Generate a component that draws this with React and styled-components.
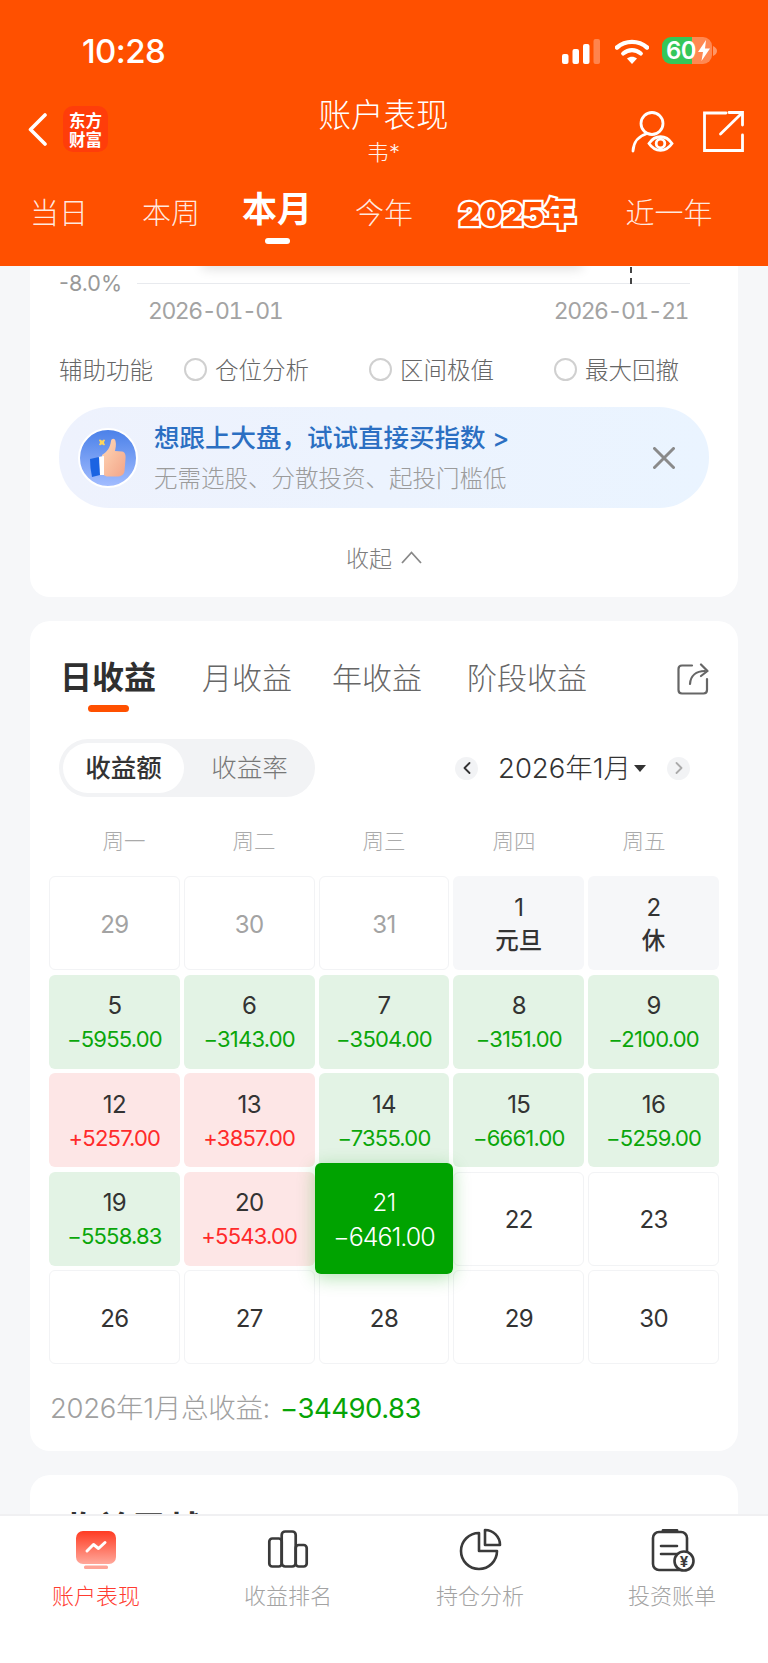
import React from "react";
import styled, { createGlobalStyle } from "styled-components";

const GlobalStyle = createGlobalStyle`
  html, body { margin: 0; padding: 0; background: #f6f7f9; }
  * { box-sizing: border-box; }
  body { font-family: Inter, "Noto Sans CJK SC", sans-serif; }
`;

const Page = styled.div`
  width: 768px;
  height: 1663px;
  display: flex;
  flex-direction: column;
  overflow: hidden;
  background: #f6f7f9;
`;

/* header */
const Header = styled.header`
  height: 266px;
  flex: none;
  background: #ff5000;
  color: #fff;
  position: relative;
  z-index: 2;
`;

const StatusBar = styled.div`
  height: 94px;
  padding: 34px 51px 0 82px;
  display: flex;
  justify-content: space-between;
  align-items: flex-start;
`;

const Clock = styled.span`
  font-size: 33px;
  font-weight: 500;
  line-height: 34px;
  letter-spacing: -0.6px;
`;

const StatusIcons = styled.div`
  display: flex;
  align-items: flex-start;
  margin-top: 5px;
`;

const Battery = styled.div`
  width: 50px;
  height: 27px;
  margin: -2px 0 0 13px;
  border-radius: 9px;
  overflow: hidden;
  position: relative;
  display: flex;
  align-items: center;
  padding-left: 4px;
  background: linear-gradient(90deg, #34c759 0 60%, rgba(255, 255, 255, 0.32) 60%);
  font-size: 24px;
  font-weight: 600;
  letter-spacing: -0.5px;
  line-height: 27px;
`;

const NavRow = styled.div`
  height: 70px;
  padding: 0 24px 0 28px;
  display: flex;
  align-items: center;
`;

const Back = styled.svg`
  width: 19px;
  height: 33px;
`;

const Logo = styled.div`
  width: 45px;
  height: 46px;
  margin-left: 16px;
  border-radius: 10px;
  background: #ff3d0a;
  font-size: 16.5px;
  font-weight: 700;
  line-height: 18.5px;
  text-align: center;
  padding-top: 5px;
  font-family: "Noto Sans CJK SC", sans-serif;
`;

const TitleBlock = styled.div`
  flex: 1;
  text-align: center;
  padding-left: 28px;
  margin-top: 2px;
`;

const Title = styled.div`
  font-size: 32.5px;
  line-height: 44px;
  font-weight: 300;
`;

const SubTitle = styled.div`
  font-size: 22px;
  line-height: 29px;
  font-weight: 300;
  opacity: 0.92;
`;

const NavIcons = styled.div`
  display: flex;
  gap: 29px;
  margin-top: 6px;
`;

const PeriodTabs = styled.div`
  margin-top: 23px;
  display: grid;
  grid-template-columns: 118px 106px 106px 108px 158px 146px;
`;

const PeriodTab = styled.div`
  position: relative;
  height: 56px;
  text-align: center;
  font-size: ${(p) => (p.$active ? 35 : 29)}px;
  font-weight: ${(p) => (p.$active ? 700 : 300)};
  line-height: ${(p) => (p.$active ? 44 : 54)}px;
  color: ${(p) => (p.$active ? "#fff" : "rgba(255,255,255,0.88)")};
`;

const PeriodMark = styled.i`
  display: block;
  width: 25px;
  height: 6px;
  margin: 7px auto 0;
  border-radius: 3px;
  background: #fff;
`;

const OutlinedTab = styled.span`
  font-size: 33px;
  font-weight: 900;
  letter-spacing: -1px;
  color: #ff5000;
  -webkit-text-stroke: 4.5px #fff;
  paint-order: stroke fill;
`;

/* content */
const Content = styled.main`
  flex: 1;
  min-height: 0;
  overflow: hidden;
  padding: 0 30px;
  display: flex;
  flex-direction: column;
  gap: 24px;
`;

const Card = styled.section`
  flex: none;
  position: relative;
  background: #fff;
  border-radius: 20px;
`;

const ChartCard = styled(Card)`
  height: 331px;
  border-radius: 0 0 20px 20px;
`;

const TooltipShadow = styled.div`
  position: absolute;
  top: -12px;
  left: 172px;
  width: 380px;
  height: 12px;
  box-shadow: 0 3px 12px rgba(0, 0, 0, 0.13);
`;

const AxisRow = styled.div`
  height: 34px;
  padding: 0 48px 0 29px;
  display: flex;
  align-items: center;
  font-size: 21.5px;
  line-height: 34px;
  color: #999;
`;

const AxisLine = styled.div`
  flex: 1;
  height: 1px;
  margin-left: 15px;
  background: #e8eaee;
  position: relative;
`;

const Crosshair = styled.div`
  position: absolute;
  left: 493px;
  bottom: 0;
  height: 17px;
  border-left: 2px dashed #444;
`;

const AxisDates = styled.div`
  display: flex;
  justify-content: space-between;
  padding: 0 50px 0 118px;
  font-size: 23px;
  line-height: 22px;
  letter-spacing: -1.5px;
  font-variant-numeric: tabular-nums;
  color: #a3a3a3;
`;

const AssistRow = styled.div`
  margin-top: 30px;
  padding-left: 29px;
  display: grid;
  grid-template-columns: 125px 185px 185px 185px;
  align-items: center;
  height: 30px;
  font-size: 23.5px;
  font-weight: 300;
  color: #666;
`;

const AssistOption = styled.label`
  display: flex;
  align-items: center;
  gap: 8px;
`;

const Radio = styled.span`
  width: 23px;
  height: 23px;
  border-radius: 50%;
  border: 2px solid #d0d0d0;
`;

const Banner = styled.div`
  margin: 25px 29px 0;
  height: 101px;
  border-radius: 50px;
  padding: 0 34px 0 19px;
  display: flex;
  align-items: center;
  background: linear-gradient(90deg, #eef2fd, #eaf4ff);
`;

const BannerText = styled.div`
  margin-left: 16px;
  flex: 1;
  margin-top: 2px;
`;

const BannerTitle = styled.div`
  font-size: 25.5px;
  line-height: 36px;
  font-weight: 500;
  color: #2b6fc2;
`;

const BannerSub = styled.div`
  margin-top: 5px;
  font-size: 23.5px;
  line-height: 36px;
  font-weight: 300;
  color: #9b9b9b;
`;

const Collapse = styled.div`
  margin-top: 30px;
  height: 38px;
  display: flex;
  justify-content: center;
  align-items: center;
  gap: 9px;
  font-size: 23px;
  font-weight: 300;
  color: #7d7d7d;
`;

const CalendarCard = styled(Card)`
  height: 830px;
  padding: 0 19px;
`;

const CalendarTabs = styled.div`
  height: 84px;
  padding: 37px 10px 0 11px;
  display: flex;
  align-items: flex-start;
  position: relative;
`;

const CalendarTab = styled.div`
  position: relative;
  margin-right: ${(p) => p.$gap}px;
  font-size: ${(p) => (p.$active ? 32 : 30)}px;
  font-weight: ${(p) => (p.$active ? 700 : 300)};
  line-height: 40px;
  color: ${(p) => (p.$active ? "#2f2f2f" : "#666")};
  white-space: nowrap;
`;

const TabMark = styled.i`
  position: absolute;
  left: 28px;
  top: 47px;
  width: 41px;
  height: 7px;
  border-radius: 4px;
  background: #ff5000;
`;

const ShareBtn = styled.svg`
  margin-left: auto;
  margin-top: 5px;
`;

const ControlRow = styled.div`
  margin-top: 34px;
  padding-left: 10px;
  display: flex;
  align-items: center;
  height: 58px;
`;

const Segment = styled.div`
  width: 256px;
  height: 58px;
  padding: 4px;
  border-radius: 29px;
  background: #f2f3f5;
  display: flex;
`;

const SegmentItem = styled.div`
  flex: none;
  width: ${(p) => (p.$active ? 121 : 131)}px;
  border-radius: 25px;
  background: ${(p) => (p.$active ? "#fff" : "transparent")};
  text-align: center;
  font-size: 25.5px;
  line-height: 50px;
  font-weight: ${(p) => (p.$active ? 500 : 300)};
  color: ${(p) => (p.$active ? "#333" : "#777")};
`;

const MonthPicker = styled.div`
  margin-left: 140px;
  display: flex;
  align-items: center;
  font-size: 27.5px;
  color: #333;
  font-weight: 300;
`;

const MonthArrow = styled.span`
  width: 23px;
  height: 23px;
  border-radius: 50%;
  background: #f2f3f5;
  display: flex;
  align-items: center;
  justify-content: center;
`;

const MonthLabel = styled.span`
  margin-left: 20px;
  padding-bottom: 4px;
  white-space: nowrap;
`;

const MonthCaret = styled.i`
  width: 0;
  height: 0;
  margin: 0 21px 0 3px;
  border-left: 6px solid transparent;
  border-right: 6px solid transparent;
  border-top: 7px solid #333;
`;

const Weekdays = styled.div`
  margin-top: 26px;
  padding: 0 10px;
  display: grid;
  grid-template-columns: repeat(5, 130px);
  text-align: center;
  font-size: 21.5px;
  font-weight: 300;
  line-height: 36px;
  color: #aaa;
`;

const DayGrid = styled.div`
  margin-top: 17px;
  display: grid;
  grid-template-columns: repeat(5, 1fr);
  grid-auto-rows: 94px;
  column-gap: 4px;
  row-gap: 4.5px;
`;

const dayBg = { up: "#fde6e6", down: "#e3f3e5", rest: "#f6f7f9" };

const DayCell = styled.div`
  border-radius: 6px;
  border: ${(p) => (dayBg[p.$tone] ? "none" : "1px solid #f2f3f5")};
  background: ${(p) => dayBg[p.$tone] || "#fff"};
  padding-top: 3px;
  display: flex;
  flex-direction: column;
  align-items: center;
  justify-content: center;
  color: ${(p) => (p.$dim ? "#a3a3a3" : "#333")};
  font-size: 24px;
  letter-spacing: -0.6px;
`;

const DayToday = styled(DayCell)`
  margin: -9px -4px -8px;
  position: relative;
  z-index: 1;
  background: #00a300;
  border: none;
  color: #fff;
  box-shadow: 0 4px 18px rgba(0, 163, 0, 0.3);
`;

const DayLine = styled.div`
  line-height: 32px;
`;

const DayNote = styled.div`
  line-height: 34px;
  font-size: ${(p) => (p.$rest ? 23.5 : 22)}px;
  letter-spacing: ${(p) => (p.$rest ? 0 : -0.8)}px;
  font-weight: ${(p) => (p.$rest ? 500 : 400)};
  color: ${(p) => (p.$tone === "up" ? "#ff2a2a" : p.$tone === "down" ? "#0aa60a" : "inherit")};
`;

const TodayNum = styled.div`
  line-height: 34px;
  font-size: 24px;
  font-weight: 300;
`;

const TodayAmount = styled.div`
  line-height: 34px;
  font-size: 25px;
  letter-spacing: -1px;
  font-weight: 300;
`;

const Total = styled.div`
  margin-top: 26px;
  padding-left: 1px;
  font-size: 27.5px;
  line-height: 36px;
  font-weight: 300;
  color: #a0a0a0;
  letter-spacing: -0.3px;
  white-space: nowrap;
`;

const TotalValue = styled.span`
  margin-left: 10px;
  font-size: 27.5px;
  font-weight: 400;
  color: #06a406;
  letter-spacing: -0.5px;
`;

const PartCard = styled(Card)`
  height: 200px;
  padding: 32px 0 0 31px;
  font-size: 35px;
  line-height: 44px;
  font-weight: 700;
  color: #333;
  display: flex;
  gap: 24px;
`;

/* bottom bar */
const TabBar = styled.nav`
  flex: none;
  height: 149px;
  background: #fff;
  border-top: 2px solid #f0f0f2;
  display: grid;
  grid-template-columns: repeat(4, 192px);
  position: relative;
  z-index: 2;
`;

const TabItem = styled.div`
  padding-top: 12px;
  display: flex;
  flex-direction: column;
  align-items: center;
  font-size: 22px;
  font-weight: 300;
  color: ${(p) => (p.$active ? "#ff3b30" : "#a3a3a3")};
`;

const TabLabel = styled.span`
  margin-top: 7px;
  line-height: 34px;
`;

const BackIcon = () => (
  <Back viewBox="0 0 19 33" fill="none" stroke="#fff" strokeWidth="3.6" strokeLinecap="round" strokeLinejoin="round">
    <path d="M17 2 L2.5 16.5 L17 31" />
  </Back>
);

const SignalIcon = () => (
  <svg width="38" height="25" viewBox="0 0 38 25" fill="#fff">
    <rect x="0" y="15" width="6.5" height="10" rx="2" />
    <rect x="10.5" y="10" width="6.5" height="15" rx="2" />
    <rect x="21" y="5" width="6.5" height="20" rx="2" />
    <rect x="31.5" y="0" width="6.5" height="25" rx="2" fill="rgba(255,255,255,0.3)" />
  </svg>
);

const WifiIcon = () => (
  <svg width="34" height="25" viewBox="0 0 34 25" fill="none" style={{ marginLeft: 15 }}>
    <path d="M2 8.5 C10.5 1 23.5 1 32 8.5" stroke="#fff" strokeWidth="4.4" strokeLinecap="round" />
    <path d="M8.2 14.5 C13.5 10 20.5 10 25.8 14.5" stroke="#fff" strokeWidth="4.2" strokeLinecap="round" />
    <path d="M12 19.5 C15 17 19 17 22 19.5 L17 25 Z" fill="#fff" />
  </svg>
);

const BatteryIcon = () => (
  <>
    <Battery>
      60
      <svg width="14" height="21" viewBox="0 0 14 21" fill="#fff" style={{ marginLeft: 1 }}>
        <path d="M9 0 L1 12 H6 L4.5 21 L13 8.5 H8 Z" />
      </svg>
    </Battery>
    <svg width="4" height="10" viewBox="0 0 4 10" style={{ marginTop: 7, marginLeft: 1 }}>
      <path d="M0 0 C2.5 1 4 3 4 5 C4 7 2.5 9 0 10 Z" fill="rgba(255,255,255,0.4)" />
    </svg>
  </>
);

const WatchIcon = () => (
  <svg width="43" height="42" viewBox="0 0 43 42" fill="none" stroke="#fff" strokeWidth="2.8" strokeLinecap="round">
    <circle cx="21" cy="12.5" r="11" />
    <path d="M2 40 C2.5 31 8 25 15 23" />
    <path d="M18 32.5 C24 23.5 35 23.5 41 32.5 C35 41.5 24 41.5 18 32.5 Z" />
    <circle cx="29.5" cy="32.5" r="4.3" />
  </svg>
);

const ExportIcon = () => (
  <svg width="41" height="41" viewBox="0 0 41 41" fill="none" stroke="#fff" strokeWidth="2.8" strokeLinecap="round" strokeLinejoin="miter">
    <path d="M23 2 H1.5 V39.5 H39.5 V24" />
    <path d="M17.5 23 L38.5 2.5" />
    <path d="M26 1.5 H39.5 V14" />
  </svg>
);

const ThumbAvatar = () => (
  <svg width="60" height="60" viewBox="0 0 60 60" style={{ flex: "none" }}>
    <defs>
      <linearGradient id="avatarBg" x1="0" y1="0" x2="0" y2="1">
        <stop offset="0" stopColor="#4a80e8" />
        <stop offset="1" stopColor="#a3bdff" />
      </linearGradient>
      <linearGradient id="thumbFill" x1="0" y1="0" x2="1" y2="1">
        <stop offset="0" stopColor="#ffd9b8" />
        <stop offset="1" stopColor="#f3a488" />
      </linearGradient>
    </defs>
    <circle cx="30" cy="30" r="29" fill="url(#avatarBg)" stroke="#fff" strokeWidth="2" />
    <path d="M24 14 Q27 16.5 29 14 Q26.5 16.5 29 19 Q26.5 16.5 24 19 Q26.5 16.5 24 14 Z" fill="#ffd65c" stroke="#ffd65c" strokeWidth="1.5" transform="translate(-2.5 -2)" />
    <path d="M24 27 C29 24 32 20 33 13 C33.5 10 37 10 37.5 13 C38.5 17 37.5 20 37 23 L44 23.5 C47 24 48 27 47.5 31 L46.5 43 C46 47 43 48.5 39 48.5 L30 48.5 C26.5 48.5 24 46 24 44 Z" fill="url(#thumbFill)" />
    <path d="M20 29 L26 28 L26 47 L21 47 Z" fill="#fff" />
    <path d="M12 31 L21 29 L22 47 L14 49 Q12 40 12 31 Z" fill="#1b63e2" />
  </svg>
);

const CloseIcon = () => (
  <svg width="22" height="22" viewBox="0 0 22 22" stroke="#8a8a8a" strokeWidth="3" strokeLinecap="round" style={{ flex: "none" }}>
    <path d="M1.5 1.5 L20.5 20.5 M20.5 1.5 L1.5 20.5" />
  </svg>
);

const UpCaret = () => (
  <svg width="21" height="13" viewBox="0 0 21 13" fill="none" stroke="#888" strokeWidth="1.8">
    <path d="M1 12 L10.5 1.5 L20 12" />
  </svg>
);

const ShareIcon = () => (
  <ShareBtn width="32" height="32" viewBox="0 0 32 32" fill="none" stroke="#666" strokeWidth="2.2" strokeLinecap="round" strokeLinejoin="round">
    <path d="M15 2.5 H5 Q1.5 2.5 1.5 6 V27 Q1.5 30.5 5 30.5 H26.5 Q30 30.5 30 27 V16" />
    <path d="M13 21 C13.5 13 19 8 28 8" />
    <path d="M24 1.5 L30.5 8 L24 13" />
  </ShareBtn>
);

const ArrowGlyph = ({ dir, color }) => (
  <svg width="8" height="12" viewBox="0 0 8 12" fill="none" stroke={color} strokeWidth="1.8" strokeLinecap="round" strokeLinejoin="round">
    <path d={dir === "left" ? "M6.5 1 L1.5 6 L6.5 11" : "M1.5 1 L6.5 6 L1.5 11"} />
  </svg>
);

const BoardIcon = () => (
  <svg width="48" height="44" viewBox="0 0 48 44">
    <defs>
      <linearGradient id="boardFill" x1="0" y1="0" x2="0" y2="1">
        <stop offset="0" stopColor="#ff3b22" />
        <stop offset="1" stopColor="#ffa89b" />
      </linearGradient>
    </defs>
    <rect x="4" y="3" width="40" height="33" rx="7" fill="url(#boardFill)" />
    <rect x="12" y="37.5" width="24" height="3.5" rx="1.5" fill="#ffa497" />
    <path d="M15 23 L21.5 16.5 L26.5 20.5 L33 14.5" fill="none" stroke="#fff" strokeWidth="3" strokeLinecap="round" strokeLinejoin="round" />
  </svg>
);

const BarsIcon = () => (
  <svg width="48" height="44" viewBox="0 0 48 44" fill="none" stroke="#3a3a3a" strokeWidth="2.7">
    <rect x="5.3" y="10.5" width="12.4" height="28" rx="3" />
    <rect x="17.7" y="3.5" width="14" height="35" rx="3.5" />
    <rect x="31.7" y="17" width="11" height="21.5" rx="3" />
  </svg>
);

const PieIcon = () => (
  <svg width="48" height="44" viewBox="0 0 48 44" fill="none" stroke="#3a3a3a" strokeWidth="2.6" strokeLinejoin="round">
    <path d="M23 5 A18 18 0 1 0 41 23 H23 Z" />
    <path d="M29 2 A15 15 0 0 1 44 17 H29 Z" />
  </svg>
);

const BillIcon = () => (
  <svg width="48" height="44" viewBox="0 0 48 44" fill="none" stroke="#3a3a3a" strokeWidth="2.6" strokeLinecap="round">
    <rect x="5" y="4" width="34" height="38" rx="6" />
    <path d="M15 2.5 H29" strokeWidth="2.8" />
    <path d="M13 18 H29 M13 26 H29" />
    <circle cx="36" cy="33" r="9.5" fill="#fff" />
    <text x="36" y="38.5" textAnchor="middle" fontSize="15" fontWeight="700" fill="#3a3a3a" stroke="none" fontFamily="Inter, sans-serif">¥</text>
  </svg>
);

const periods = [
  { label: "当日" },
  { label: "本周" },
  { label: "本月", active: true },
  { label: "今年" },
  { label: "2025年", outlined: true },
  { label: "近一年" },
];

const days = [
  { n: 29, dim: true }, { n: 30, dim: true }, { n: 31, dim: true },
  { n: 1, note: "元旦", tone: "rest" }, { n: 2, note: "休", tone: "rest" },
  { n: 5, note: "−5955.00", tone: "down" }, { n: 6, note: "−3143.00", tone: "down" },
  { n: 7, note: "−3504.00", tone: "down" }, { n: 8, note: "−3151.00", tone: "down" },
  { n: 9, note: "−2100.00", tone: "down" },
  { n: 12, note: "+5257.00", tone: "up" }, { n: 13, note: "+3857.00", tone: "up" },
  { n: 14, note: "−7355.00", tone: "down" }, { n: 15, note: "−6661.00", tone: "down" },
  { n: 16, note: "−5259.00", tone: "down" },
  { n: 19, note: "−5558.83", tone: "down" }, { n: 20, note: "+5543.00", tone: "up" },
  { n: 21, note: "−6461.00", today: true },
  { n: 22 }, { n: 23 }, { n: 26 }, { n: 27 }, { n: 28 }, { n: 29 }, { n: 30 },
];

const tabs = [
  { label: "账户表现", icon: <BoardIcon />, active: true },
  { label: "收益排名", icon: <BarsIcon /> },
  { label: "持仓分析", icon: <PieIcon /> },
  { label: "投资账单", icon: <BillIcon /> },
];

export default function App() {
  return (
    <Page>
      <GlobalStyle />
      <Header>
        <StatusBar>
          <Clock>10:28</Clock>
          <StatusIcons>
            <SignalIcon />
            <WifiIcon />
            <BatteryIcon />
          </StatusIcons>
        </StatusBar>
        <NavRow>
          <BackIcon />
          <Logo>东方<br />财富</Logo>
          <TitleBlock>
            <Title>账户表现</Title>
            <SubTitle>韦*</SubTitle>
          </TitleBlock>
          <NavIcons>
            <WatchIcon />
            <ExportIcon />
          </NavIcons>
        </NavRow>
        <PeriodTabs>
          {periods.map((p) => (
            <PeriodTab key={p.label} $active={p.active}>
              {p.outlined ? <OutlinedTab>{p.label}</OutlinedTab> : p.label}
              {p.active && <PeriodMark />}
            </PeriodTab>
          ))}
        </PeriodTabs>
      </Header>

      <Content>
        <ChartCard>
          <TooltipShadow />
          <AxisRow>
            -8.0%
            <AxisLine>
              <Crosshair />
            </AxisLine>
          </AxisRow>
          <AxisDates>
            <span>2026-01-01</span>
            <span>2026-01-21</span>
          </AxisDates>
          <AssistRow>
            <span>辅助功能</span>
            {["仓位分析", "区间极值", "最大回撤"].map((o) => (
              <AssistOption key={o}>
                <Radio />
                {o}
              </AssistOption>
            ))}
          </AssistRow>
          <Banner>
            <ThumbAvatar />
            <BannerText>
              <BannerTitle>想跟上大盘{"\uFF0C"}试试直接买指数 &gt;</BannerTitle>
              <BannerSub>无需选股、分散投资、起投门槛低</BannerSub>
            </BannerText>
            <CloseIcon />
          </Banner>
          <Collapse>
            收起
            <UpCaret />
          </Collapse>
        </ChartCard>

        <CalendarCard>
          <CalendarTabs>
            <CalendarTab $active $gap={46}>
              日收益
              <TabMark />
            </CalendarTab>
            <CalendarTab $gap={40}>月收益</CalendarTab>
            <CalendarTab $gap={45}>年收益</CalendarTab>
            <CalendarTab $gap={0}>阶段收益</CalendarTab>
            <ShareIcon />
          </CalendarTabs>
          <ControlRow>
            <Segment>
              <SegmentItem $active>收益额</SegmentItem>
              <SegmentItem>收益率</SegmentItem>
            </Segment>
            <MonthPicker>
              <MonthArrow>
                <ArrowGlyph dir="left" color="#333" />
              </MonthArrow>
              <MonthLabel>2026年1月</MonthLabel>
              <MonthCaret />
              <MonthArrow>
                <ArrowGlyph dir="right" color="#aaa" />
              </MonthArrow>
            </MonthPicker>
          </ControlRow>
          <Weekdays>
            {["周一", "周二", "周三", "周四", "周五"].map((d) => (
              <span key={d}>{d}</span>
            ))}
          </Weekdays>
          <DayGrid>
            {days.map((d, i) =>
              d.today ? (
                <DayToday key={i}>
                  <TodayNum>{d.n}</TodayNum>
                  <TodayAmount>{d.note}</TodayAmount>
                </DayToday>
              ) : (
                <DayCell key={i} $tone={d.tone} $dim={d.dim}>
                  <DayLine>{d.n}</DayLine>
                  {d.note && (
                    <DayNote $tone={d.tone} $rest={d.tone === "rest"}>
                      {d.note}
                    </DayNote>
                  )}
                </DayCell>
              )
            )}
          </DayGrid>
          <Total>
            2026年1月总收益:
            <TotalValue>−34490.83</TotalValue>
          </Total>
        </CalendarCard>

        <PartCard>
          <span>收益贡献</span>
        </PartCard>
      </Content>

      <TabBar>
        {tabs.map((t) => (
          <TabItem key={t.label} $active={t.active}>
            {t.icon}
            <TabLabel>{t.label}</TabLabel>
          </TabItem>
        ))}
      </TabBar>
    </Page>
  );
}
